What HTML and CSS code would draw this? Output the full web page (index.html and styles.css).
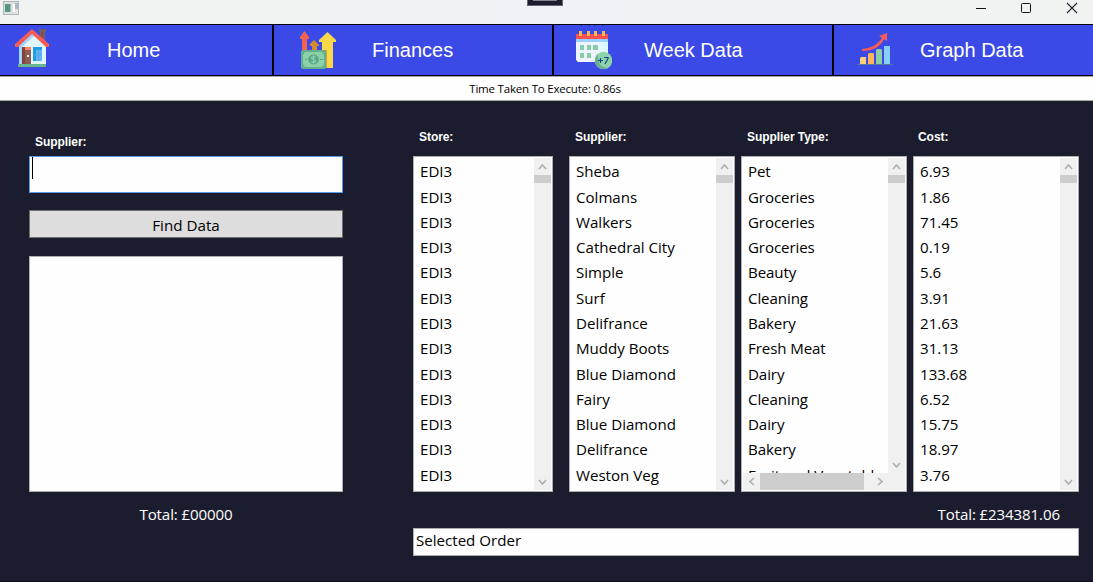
FILE: index.html
```html
<!DOCTYPE html>
<html lang="en">
<head>
<meta charset="utf-8">
<title>Finances</title>
<link rel="stylesheet" href="styles.css">
</head>
<body>
<header class="titlebar">
  <svg class="app-icon" width="16" height="15" viewBox="0 0 16 15"><rect x=".5" y=".5" width="15" height="13" fill="#dfe2e2" stroke="#b0b5b8"/><rect x="2" y="3" width="6" height="8" fill="#559783"/><path d="M7 3h1v8H7z" fill="#a8b4b0"/><path d="M9 3h3v8H9z" fill="#ddd"/><path d="M12 2h3v6h-3z" fill="#a9b6c8"/><path d="M10 3h2v8h-2z" fill="#fff"/></svg>
  <div class="tab-grip"></div>
  <svg class="window-controls" width="110" height="16" viewBox="0 0 110 16" fill="none" stroke="#111"><path d="M3 8.5h10"/><rect x="48.5" y="3.5" width="9" height="9" rx="1"/><path d="M94 3l10 10M104 3L94 13" stroke="#202030" stroke-width="1.1"/></svg>
</header>
<nav class="nav">
  <a class="tab home">
    <svg width="36" height="40" viewBox="0 0 36 40"><path d="M24 1h7v3h-1v9h-5V4h-1z" fill="#74605d"/><path d="M26 4h2v8h-2z" fill="#93483f"/><path d="M4 17L17 4l14 13v20H4z" fill="#e1f5fc"/><path d="M4 17L17 4l3 3L7 19v18H4z" fill="#a3d5fa"/><path d="M0 16L17 1l17 15v3h-3L17 6 3 19H0z" fill="#f95c57"/><path d="M7 19h9v18H7z" fill="#905b52"/><path d="M7 19h3v18H7z" fill="#80433b"/><path d="M10 19h6v3h-6z" fill="#ff8067"/><path d="M12 27h2v2h-2z" fill="#eee"/><path d="M18 19h9v14h-9z" fill="#1e9de3"/><path d="M21 22h6v11h-6z" fill="#64b5f6"/><path d="M18 27h9M23.5 22v11" stroke="#45a7e9"/><path d="M3 36h28v3H3z" fill="#67b58e"/></svg>
    <span class="tab-label">Home</span>
  </a>
  <a class="tab finances">
    <svg width="36" height="40" viewBox="0 0 36 40"><path d="M2 20V9H0v-2l4.500-6L9 7v2H7v11z" fill="#f1624f"/><path d="M12 20v-4h-2v-2l4-4 5 5v1h-2v4z" fill="#d78b31"/><path d="M22 38V12h-3v-2l8.500-8L36 10v2h-3v26z" fill="#f9d84a"/><path d="M20 20h7v18h-7z" fill="#e59836"/><rect x="1" y="20" width="25" height="19" rx="2" fill="#62b08e"/><path d="M5 22h17l2 3v9l-2 3H5l-2-3v-9z" fill="#8bd0a7"/><ellipse cx="13.500" cy="29.500" rx="5.300" ry="5" fill="#58a88a"/><path d="M15.500 27.500c-1-1.300-4-1-4 .5s4 1 4 3-3.500 2-4 .5M13.500 25.500v8" fill="none" stroke="#8bd0a7" stroke-width="1.200"/><path d="M5 29.500h2M20 29.500h3" stroke="#58a88a"/></svg>
    <span class="tab-label">Finances</span>
  </a>
  <a class="tab week">
    <svg width="36" height="40" viewBox="0 0 36 40"><path d="M0 10h32v20H22v2H2l-2-2z" fill="#edf3ff"/><path d="M25 12h7v18h-7z" fill="#d9f8ff"/><path d="M0 9h32v3H0z" fill="#9bcfff"/><path d="M0 4h32v5H0z" fill="#f8514f"/><path d="M3 1h3v5H3zM11 1h3v5h-3zM18 1h3v5h-3zM26 1h3v5h-3z" fill="#f9b956"/><path d="M4 15h4v5H4zM11 15h4v5h-4zM17 15h5v5h-5zM4 23h4v5H4zM11 23h4v5h-4z" fill="#87cda4"/><circle cx="27.500" cy="30.500" r="8.700" fill="#8fd3aa"/><path d="M22 24c-4 4-4 10 0 13s7 2 9 1c-8-1-10-8-9-14z" fill="#69ae91"/><path d="M22 30.500h5M24.500 28v5M28 27.500h4v1l-3 5.500" fill="none" stroke="#104a80" stroke-width="1.200"/></svg>
    <span class="tab-label">Week Data</span>
  </a>
  <a class="tab graph">
    <svg width="36" height="40" viewBox="0 0 36 40"><path d="M5 17c10-1 16-5 20-11l-3-2 8-3 0 8-3-2C24 14 17 19 5 19z" fill="#f95b57"/><path d="M3 26l1-1h5v7H3z" fill="#f7d078"/><path d="M11 22l1-1h4l1 1v10h-6z" fill="#ffb55b"/><path d="M19 18l1-1h4l1 1v14h-6z" fill="#8bcda5"/><path d="M27 14h6v18h-6z" fill="#86cefc"/><path d="M0 32h36v1H0z" fill="#56799b"/></svg>
    <span class="tab-label">Graph Data</span>
  </a>
</nav>
<div class="status"><span>Time Taken To Execute: 0.86s</span></div>
<main class="content">
  <section class="search">
    <h2 class="label">Supplier:</h2>
    <div class="search-input"><i class="caret"></i></div>
    <button class="find">Find Data</button>
    <div class="results"></div>
    <p class="total">Total: £00000</p>
  </section>
  <section class="data">
    <div class="columns">
      <div class="column store"><h2 class="label">Store:</h2>
        <div class="list"><ul class="rows"><li>EDI3</li><li>EDI3</li><li>EDI3</li><li>EDI3</li><li>EDI3</li><li>EDI3</li><li>EDI3</li><li>EDI3</li><li>EDI3</li><li>EDI3</li><li>EDI3</li><li>EDI3</li><li>EDI3</li></ul>
        <div class="vbar"><svg class="arrow" viewBox="0 0 17 17"><path d="M5 11l3.500-4 3.500 4"/></svg><i class="thumb"></i><svg class="arrow down" viewBox="0 0 17 17"><path d="M5 7l3.500 4L12 7"/></svg></div></div>
      </div>
      <div class="column supplier"><h2 class="label">Supplier:</h2>
        <div class="list"><ul class="rows"><li>Sheba</li><li>Colmans</li><li>Walkers</li><li>Cathedral City</li><li>Simple</li><li>Surf</li><li>Delifrance</li><li>Muddy Boots</li><li>Blue Diamond</li><li>Fairy</li><li>Blue Diamond</li><li>Delifrance</li><li>Weston Veg</li></ul>
        <div class="vbar"><svg class="arrow" viewBox="0 0 17 17"><path d="M5 11l3.500-4 3.500 4"/></svg><i class="thumb"></i><svg class="arrow down" viewBox="0 0 17 17"><path d="M5 7l3.500 4L12 7"/></svg></div></div>
      </div>
      <div class="column type"><h2 class="label">Supplier Type:</h2>
        <div class="list scroll-x"><ul class="rows"><li>Pet</li><li>Groceries</li><li>Groceries</li><li>Groceries</li><li>Beauty</li><li>Cleaning</li><li>Bakery</li><li>Fresh Meat</li><li>Dairy</li><li>Cleaning</li><li>Dairy</li><li>Bakery</li><li>Fruit and Vegetables</li></ul>
        <div class="vbar"><svg class="arrow" viewBox="0 0 17 17"><path d="M5 11l3.500-4 3.500 4"/></svg><i class="thumb"></i><svg class="arrow down" viewBox="0 0 17 17"><path d="M5 7l3.500 4L12 7"/></svg></div>
        <div class="hbar"><svg class="arrow" viewBox="0 0 17 17"><path d="M11 5L7 8.500l4 3.500"/></svg><i class="hthumb"></i><svg class="arrow" viewBox="0 0 17 17"><path d="M7 5l4 3.500L7 12"/></svg></div></div>
      </div>
      <div class="column cost"><h2 class="label">Cost:</h2>
        <div class="list"><ul class="rows"><li>6.93</li><li>1.86</li><li>71.45</li><li>0.19</li><li>5.6</li><li>3.91</li><li>21.63</li><li>31.13</li><li>133.68</li><li>6.52</li><li>15.75</li><li>18.97</li><li>3.76</li></ul>
        <div class="vbar"><svg class="arrow" viewBox="0 0 17 17"><path d="M5 11l3.500-4 3.500 4"/></svg><i class="thumb"></i><svg class="arrow down" viewBox="0 0 17 17"><path d="M5 7l3.500 4L12 7"/></svg></div></div>
      </div>
    </div>
    <p class="total grand">Total: £234381.06</p>
    <div class="selected">Selected Order</div>
  </section>
</main>
</body>
</html>
```
FILE: styles.css
```css
* { box-sizing: border-box; margin: 0; padding: 0; }
body { width: 1093px; height: 582px; overflow: hidden; background: #1b1d2e; color: #000; font: 15.1px/20px "Open Sans", sans-serif; display: flex; flex-direction: column; }
svg { display: block; flex: none; }
.titlebar { height: 24px; flex: none; background: linear-gradient(90deg, #f1f3f2 25%, #eff3f8 50%, #f1f3f2 85%); display: flex; align-items: flex-start; }
.app-icon { margin: 1px 0 0 3px; }
.tab-grip { width: 36px; height: 6px; margin-left: 508px; background: #1b1d2e; border: 1px solid #666570; border-top: 0; }
.tab-grip::before { content: ""; display: block; height: 1px; margin: 0 5px; background: #85858d; }
.window-controls { margin-left: 410px; }
.nav { display: grid; grid-template-columns: 274px 280px 280px 259px; height: 52px; flex: none; border: solid #000; border-width: 1px 0; background: #3b4ae6; }
.tab { display: flex; align-items: flex-start; padding-top: 3px; border-right: 2px solid #000; color: #fff; font: 20px/44px "Liberation Sans", Arial, sans-serif; white-space: nowrap; }
.tab:last-child { border-right: 0; }
.home { padding-left: 15px; }
.finances { padding-left: 26px; }
.week { padding-left: 22px; }
.graph { padding-left: 23px; }
.finances svg, .week svg { margin-top: 2px; }
.graph svg { margin-top: 4px; }
.home .tab-label { margin-left: 56px; }
.finances .tab-label { margin-left: 36px; }
.week .tab-label { margin-left: 32px; }
.graph .tab-label { margin-left: 27px; }
.status { height: 25px; flex: none; background: #fefefe; border: solid #a7a8b0; border-width: 1px 0; text-align: center; font-size: 11.5px; letter-spacing: -0.2px; line-height: 23px; padding-right: 3px; }
.content { display: flex; flex: 1; padding-left: 29px; gap: 70px; border-bottom: 1px solid #10111b; }
.label { color: #fff; font: bold 12px/16px "Liberation Sans", Arial, sans-serif; letter-spacing: -0.06px; white-space: nowrap; padding-left: 6px; }
.search { width: 314px; padding-top: 33px; }
.search-input { height: 37px; margin-top: 6px; background: #fefefe; border: 1px solid #569de5; padding: 0 2px; }
.caret { display: block; width: 1px; height: 22px; background: #000; }
.find { display: block; width: 100%; height: 28px; margin-top: 17px; background: #ddd; border: 1px solid #707070; font: 15.2px/26px "Open Sans", sans-serif; color: #000; padding-top: 1px; }
.results { height: 236px; margin-top: 18px; background: #fefefe; border: 1px solid #abadb3; }
.total { color: #fff; text-align: center; margin-top: 12px; letter-spacing: -0.12px; }
.data { width: 666px; padding-top: 28px; }
.columns { display: flex; gap: 6px; }
.column { width: 166px; }
.store { width: 140px; margin-right: 10px; }
.cost .label { padding-left: 5px; }
.list { height: 336px; margin-top: 11px; background: #fefefe; border: 1px solid #abadb3; padding: 1px; display: grid; grid-template: minmax(0, 1fr) / minmax(0, 1fr) 17px; }
.rows { list-style: none; padding: 1px 0 0 5px; overflow: hidden; white-space: nowrap; }
.rows li { height: 25px; line-height: 25px; }
.rows li:nth-child(1), .rows li:nth-child(5), .rows li:nth-child(8), .rows li:nth-child(12) { height: 26px; }
.type .rows { letter-spacing: -0.1px; }
.vbar { display: flex; flex-direction: column; background: #f0f0f0; }
.arrow { width: 17px; height: 17px; fill: none; stroke: #a9b0b0; stroke-width: 1.6; }
.thumb { height: 8px; background: #cdcdcd; }
.down { margin-top: auto; }
.scroll-x { grid-template-rows: minmax(0, 1fr) 17px; }
.hbar { grid-column: 1 / 3; display: flex; background: #f0f0f0; }
.hthumb { width: 104px; background: #cdcdcd; margin-right: 7px; }
.grand { text-align: right; padding-right: 19px; }
.selected { height: 28px; margin-top: 4px; background: #fefefe; border: 1px solid #abadb3; padding: 1px 2px; line-height: 20px; }
```
